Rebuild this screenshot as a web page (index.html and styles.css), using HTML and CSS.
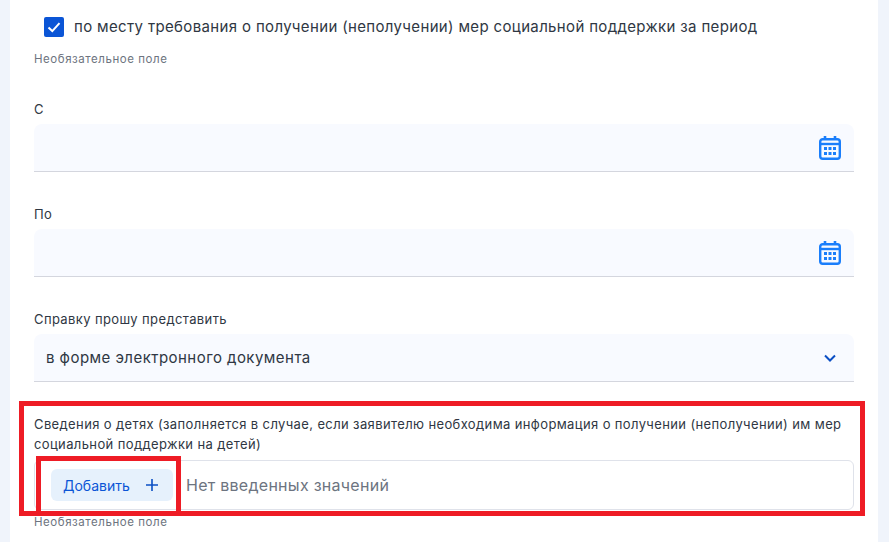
FILE: index.html
```html
<!DOCTYPE html>
<html lang="ru">
<head>
  <meta charset="UTF-8">
  <title>Справка</title>
  <link rel="stylesheet" href="styles.css">
</head>
<body>
  <main class="card">
    <div class="check-row">
      <span class="checkbox">
        <svg viewBox="0 0 20 20" width="20" height="20"><path d="M4.5 10.5l3.8 3.6 7.2-8" fill="none" stroke="#fff" stroke-width="2"/></svg>
      </span>
      <span class="check-text">по месту требования о получении (неполучении) мер социальной поддержки за период</span>
    </div>
    <div class="hint hint-top">Необязательное поле</div>

    <label class="label label-first">С</label>
    <div class="input">
      <svg class="calendar" viewBox="0 0 22 24" width="22" height="24">
        <path d="M6 0v4M16 0v4" stroke="#1a7efb" stroke-width="2.600" fill="none"/>
        <rect x="1.200" y="3.200" width="19.600" height="19.600" rx="2.500" fill="none" stroke="#1a7efb" stroke-width="2.400"/>
        <path d="M1 8h20" stroke="#1a7efb" stroke-width="2.400"/>
        <path d="M5 11h3v3H5zM9.500 11h3v3h-3zM14 11h3v3h-3zM5 16h3v3H5zM9.500 16h3v3h-3zM14 16h3v3h-3z" fill="#1a7efb"/>
      </svg>
    </div>

    <label class="label">По</label>
    <div class="input">
      <svg class="calendar" viewBox="0 0 22 24" width="22" height="24">
        <path d="M6 0v4M16 0v4" stroke="#1a7efb" stroke-width="2.600" fill="none"/>
        <rect x="1.200" y="3.200" width="19.600" height="19.600" rx="2.500" fill="none" stroke="#1a7efb" stroke-width="2.400"/>
        <path d="M1 8h20" stroke="#1a7efb" stroke-width="2.400"/>
        <path d="M5 11h3v3H5zM9.500 11h3v3h-3zM14 11h3v3h-3zM5 16h3v3H5zM9.500 16h3v3h-3zM14 16h3v3h-3z" fill="#1a7efb"/>
      </svg>
    </div>

    <label class="label">Справку прошу представить</label>
    <div class="input select">
      <span>в форме электронного документа</span>
      <svg class="chevron" viewBox="0 0 12 8" width="12" height="8"><path d="M1 1.500l5 5 5-5" fill="none" stroke="#0b4fc4" stroke-width="2"/></svg>
    </div>

    <div class="children">
      <label class="label label-long">Сведения о детях (заполняется в случае, если заявителю необходима информация о получении (неполучении) им мер социальной поддержки на детей)</label>
      <div class="list-box">
        <button class="add-btn">Добавить
          <svg viewBox="0 0 14 14" width="14" height="14"><path d="M7 1v12M1 7h12" stroke="#0b4fc4" stroke-width="1.600"/></svg>
        </button>
        <span class="empty">Нет введенных значений</span>
      </div>
      <div class="hint hint-bottom">Необязательное поле</div>
    </div>
  </main>

  <div class="mark mark-outer"></div>
  <div class="mark mark-inner"></div>
</body>
</html>
```

FILE: styles.css
```css
html, body {
  height: 100%;
}

body {
  margin: 0;
  overflow: hidden;
  background-color: #f0f4fb;
  font-family: Inter, "Noto Sans", sans-serif;
  color: #2f3743;
}

.card {
  margin: 0 11px 0 10px;
  height: 542px;
  box-sizing: border-box;
  padding: 17px 24px 0 24px;
  background-color: #fff;
}

.check-row {
  display: flex;
  align-items: center;
  gap: 10px;
  padding-left: 10px;
  height: 20px;
}

.checkbox {
  width: 20px;
  height: 20px;
  border-radius: 2px;
  background-color: #0b55d6;
  display: flex;
}

.check-text {
  font-size: 15px;
  line-height: 20px;
  letter-spacing: 0.35px;
  white-space: nowrap;
}

.hint {
  font-size: 11.5px;
  line-height: 14px;
  letter-spacing: 0.55px;
  color: #6d7480;
}

.hint-top {
  margin-top: 15px;
}

.hint-bottom {
  margin-top: 5px;
}

.label {
  display: block;
  margin-top: 34px;
  margin-bottom: 7px;
  font-size: 13px;
  line-height: 16px;
  letter-spacing: 0.38px;
}

.label-first {
  margin-top: 35px;
}

.label-long {
  margin-top: 0;
  margin-bottom: 6px;
  line-height: 20px;
}

.input {
  height: 48px;
  box-sizing: border-box;
  padding: 0 13px;
  display: flex;
  align-items: center;
  justify-content: flex-end;
  background-color: #f8faff;
  border-bottom: 1px solid #d4d6de;
  border-radius: 8px 8px 0 0;
}

.calendar {
  margin-top: 1px;
}

.select {
  justify-content: space-between;
  padding-left: 12px;
  padding-right: 18px;
  font-size: 15px;
  letter-spacing: 0.46px;
}

.children {
  margin-top: 32px;
}

.list-box {
  height: 50px;
  box-sizing: border-box;
  display: flex;
  align-items: center;
  gap: 13px;
  padding-left: 16px;
  border: 1px solid #dfe2ea;
  border-radius: 6px;
}

.add-btn {
  width: 122px;
  height: 32px;
  box-sizing: border-box;
  display: flex;
  align-items: center;
  justify-content: space-between;
  padding: 0 14px 0 12px;
  border: none;
  border-radius: 6px;
  background-color: #e6f1fc;
  color: #0b55d6;
  font-family: inherit;
  font-size: 14px;
}

.empty {
  font-size: 16px;
  letter-spacing: 0.27px;
  color: #6d7480;
}

.mark {
  position: absolute;
  box-sizing: border-box;
  border: 5px solid #ee1c25;
}

.mark-outer {
  left: 19px;
  top: 401px;
  width: 846px;
  height: 115px;
}

.mark-inner {
  left: 36px;
  top: 456px;
  width: 145px;
  height: 60px;
}
```
